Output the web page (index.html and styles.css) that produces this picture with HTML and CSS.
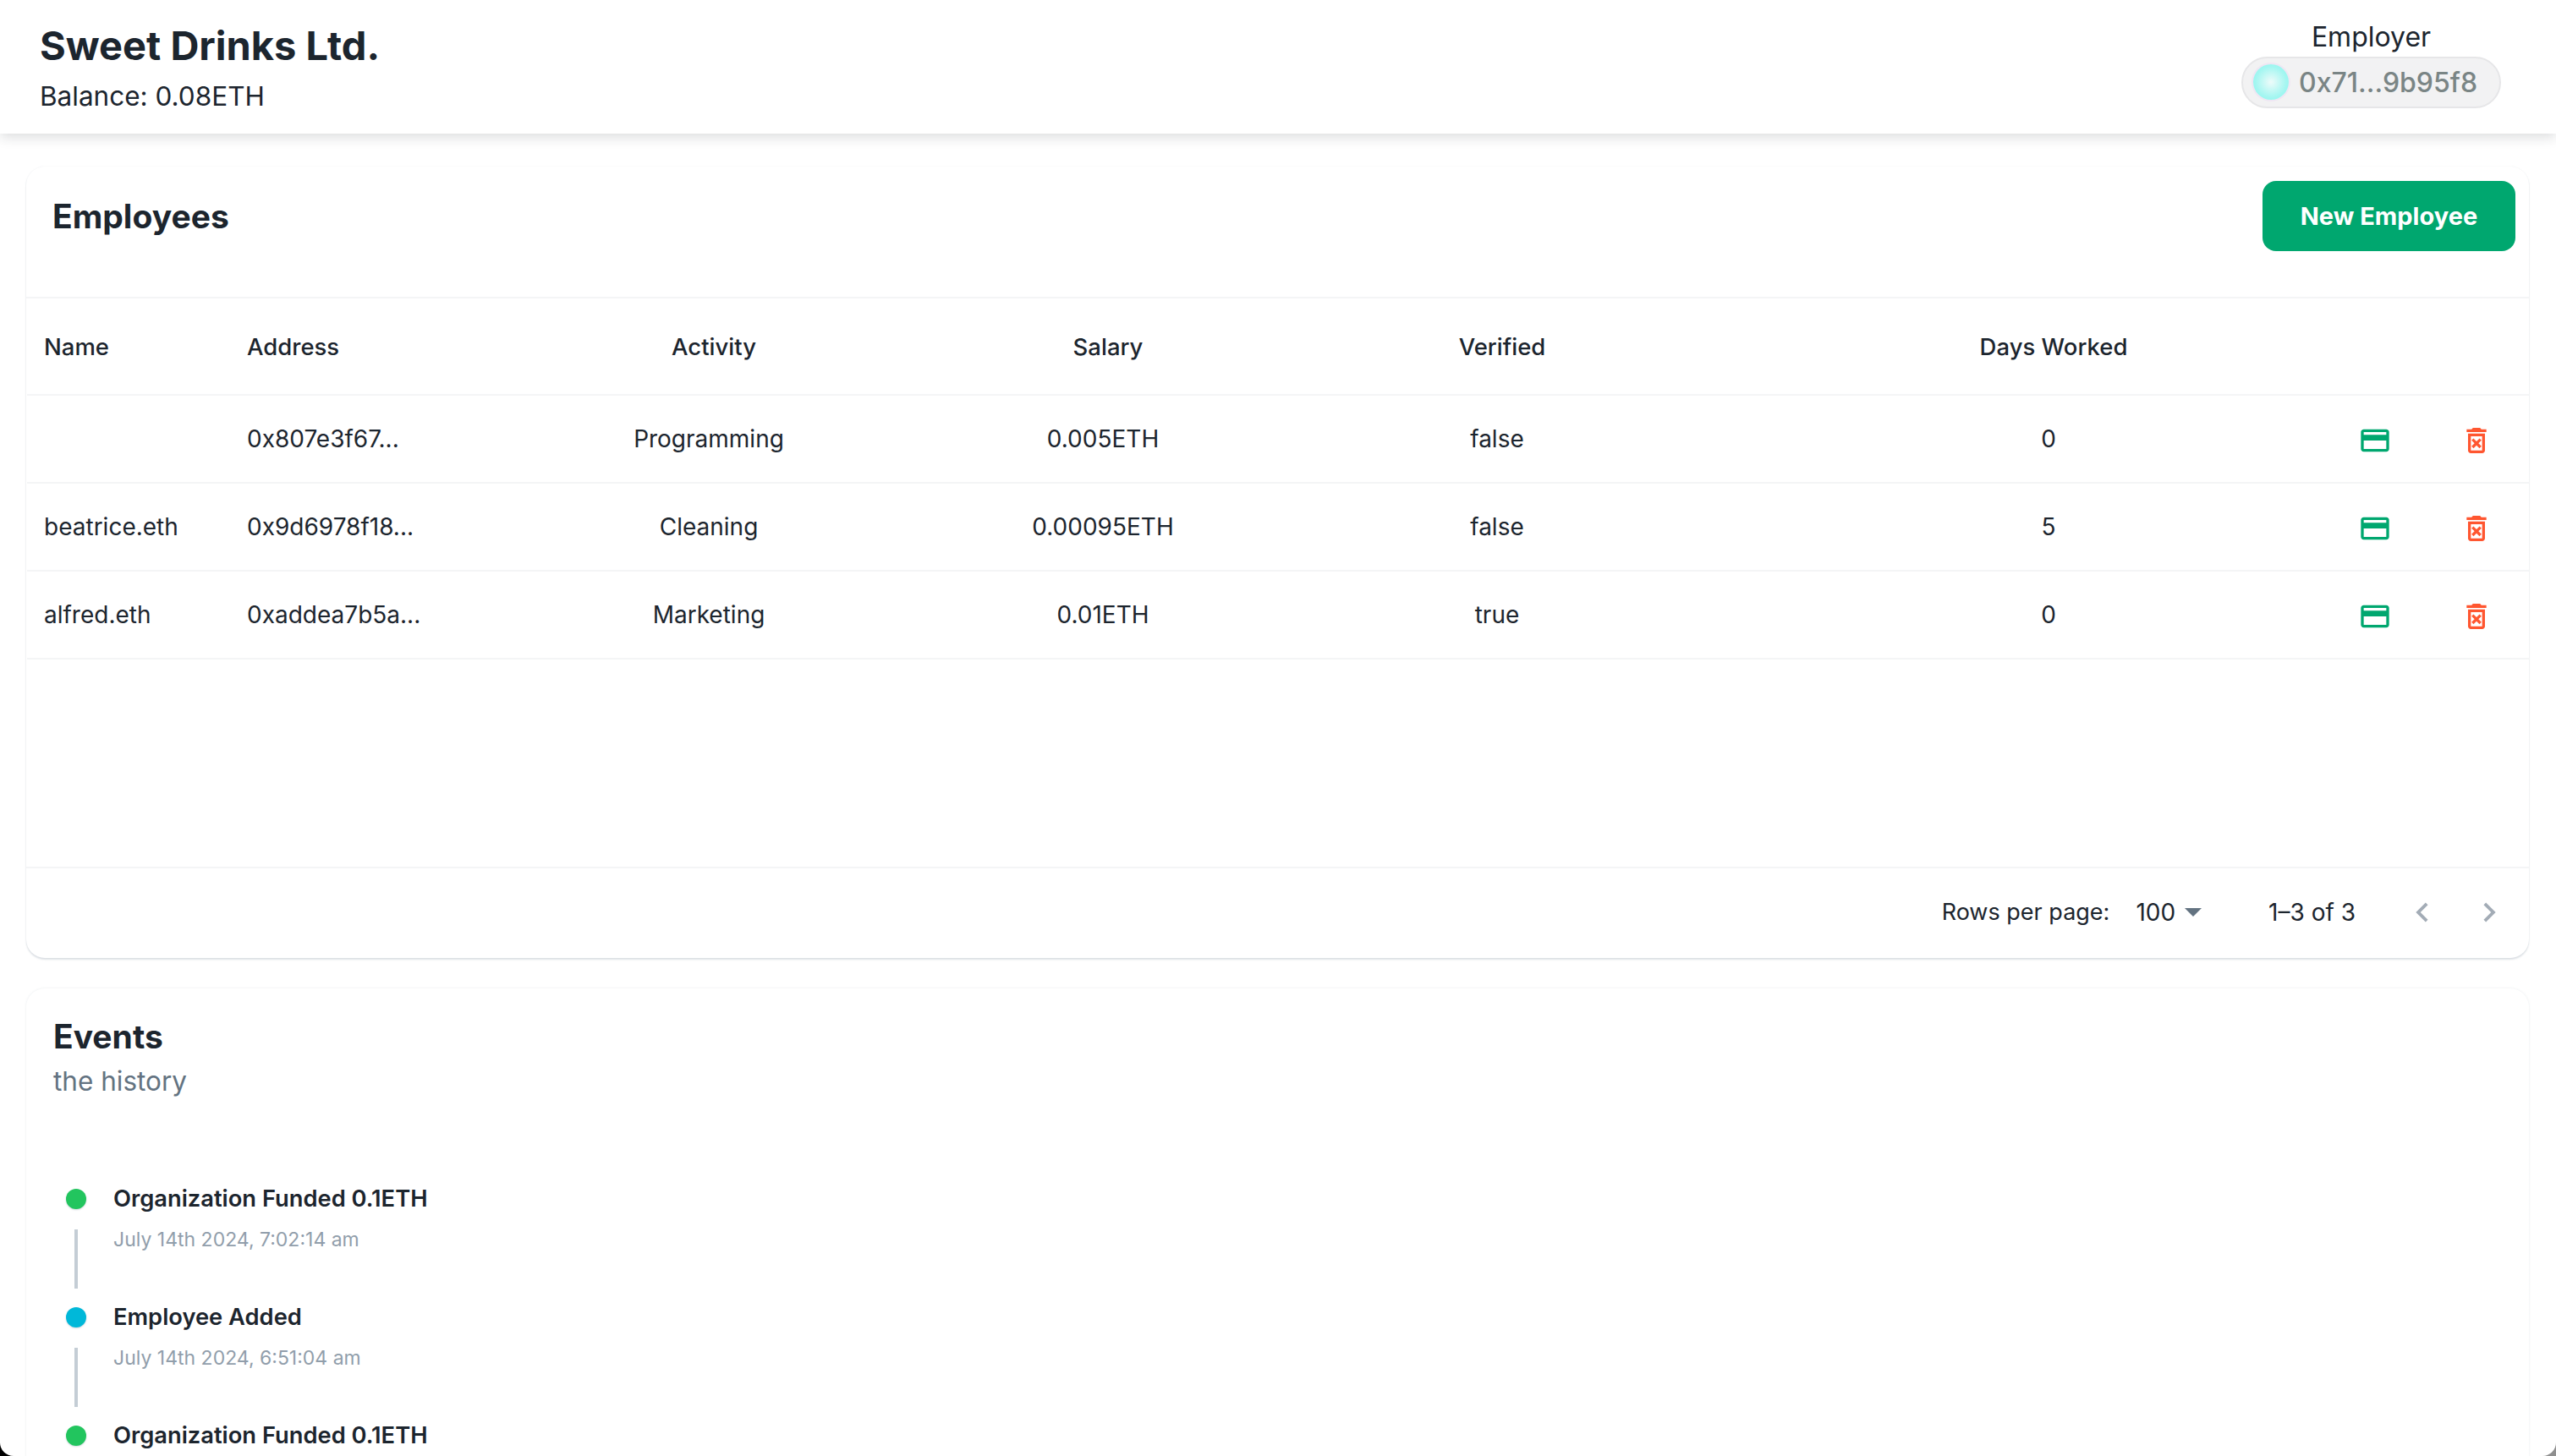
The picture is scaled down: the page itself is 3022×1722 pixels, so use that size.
FILE: index.html
```html
<!DOCTYPE html>
<html lang="en">
<head>
  <meta charset="UTF-8">
  <title>Sweet Drinks Ltd.</title>
  <link rel="stylesheet" href="styles.css">
</head>
<body>
  <div class="screen">
    <header class="topbar">
      <div>
        <h1 class="org-name">Sweet Drinks Ltd.</h1>
        <p class="org-balance">Balance: 0.08ETH</p>
      </div>
      <div class="account">
        <span class="account-role">Employer</span>
        <div class="account-pill">
          <span class="avatar"></span>
          <span class="account-address">0x71...9b95f8</span>
        </div>
      </div>
    </header>

    <main class="content">
      <section class="card employees">
        <div class="card-head">
          <h2 class="card-title">Employees</h2>
          <button class="new-btn">New Employee</button>
        </div>

        <div class="grid-row grid-header">
          <div class="cell">Name</div>
          <div class="cell">Address</div>
          <div class="cell mid">Activity</div>
          <div class="cell mid">Salary</div>
          <div class="cell mid">Verified</div>
          <div class="cell mid days">Days Worked</div>
          <div class="cell"></div>
          <div class="cell"></div>
        </div>

        <div class="grid-row">
          <div class="cell"></div>
          <div class="cell">0x807e3f67...</div>
          <div class="cell mid">Programming</div>
          <div class="cell mid">0.005ETH</div>
          <div class="cell mid">false</div>
          <div class="cell mid days">0</div>
          <div class="cell mid"><svg class="icon pay" viewBox="0 0 24 24"><path d="M20 4H4c-1.11 0-1.99.89-1.99 2L2 18c0 1.11.89 2 2 2h16c1.11 0 2-.89 2-2V6c0-1.11-.89-2-2-2zm0 14H4v-6h16v6zm0-10H4V6h16v2z"/></svg></div>
          <div class="cell mid"><svg class="icon del" viewBox="0 0 24 24"><path d="M14.12 10.47 12 12.59l-2.13-2.12-1.41 1.41L10.59 14l-2.12 2.12 1.41 1.41L12 15.41l2.12 2.12 1.41-1.41L13.41 14l2.12-2.12zM15.5 4l-1-1h-5l-1 1H5v2h14V4zM6 19c0 1.1.9 2 2 2h8c1.1 0 2-.9 2-2V7H6v12zM8 9h8v10H8V9z"/></svg></div>
        </div>

        <div class="grid-row">
          <div class="cell">beatrice.eth</div>
          <div class="cell">0x9d6978f18...</div>
          <div class="cell mid">Cleaning</div>
          <div class="cell mid">0.00095ETH</div>
          <div class="cell mid">false</div>
          <div class="cell mid days">5</div>
          <div class="cell mid"><svg class="icon pay" viewBox="0 0 24 24"><path d="M20 4H4c-1.11 0-1.99.89-1.99 2L2 18c0 1.11.89 2 2 2h16c1.11 0 2-.89 2-2V6c0-1.11-.89-2-2-2zm0 14H4v-6h16v6zm0-10H4V6h16v2z"/></svg></div>
          <div class="cell mid"><svg class="icon del" viewBox="0 0 24 24"><path d="M14.12 10.47 12 12.59l-2.13-2.12-1.41 1.41L10.59 14l-2.12 2.12 1.41 1.41L12 15.41l2.12 2.12 1.41-1.41L13.41 14l2.12-2.12zM15.5 4l-1-1h-5l-1 1H5v2h14V4zM6 19c0 1.1.9 2 2 2h8c1.1 0 2-.9 2-2V7H6v12zM8 9h8v10H8V9z"/></svg></div>
        </div>

        <div class="grid-row">
          <div class="cell">alfred.eth</div>
          <div class="cell">0xaddea7b5a...</div>
          <div class="cell mid">Marketing</div>
          <div class="cell mid">0.01ETH</div>
          <div class="cell mid">true</div>
          <div class="cell mid days">0</div>
          <div class="cell mid"><svg class="icon pay" viewBox="0 0 24 24"><path d="M20 4H4c-1.11 0-1.99.89-1.99 2L2 18c0 1.11.89 2 2 2h16c1.11 0 2-.89 2-2V6c0-1.11-.89-2-2-2zm0 14H4v-6h16v6zm0-10H4V6h16v2z"/></svg></div>
          <div class="cell mid"><svg class="icon del" viewBox="0 0 24 24"><path d="M14.12 10.47 12 12.59l-2.13-2.12-1.41 1.41L10.59 14l-2.12 2.12 1.41 1.41L12 15.41l2.12 2.12 1.41-1.41L13.41 14l2.12-2.12zM15.5 4l-1-1h-5l-1 1H5v2h14V4zM6 19c0 1.1.9 2 2 2h8c1.1 0 2-.9 2-2V7H6v12zM8 9h8v10H8V9z"/></svg></div>
        </div>

        <div class="grid-empty"></div>

        <div class="pager">
          <span class="pager-label">Rows per page:</span>
          <span class="pager-size">100<svg class="caret" viewBox="0 0 20 10"><path d="M0 0h20L10 10z"/></svg></span>
          <span class="pager-range">1–3 of 3</span>
          <svg class="chev" viewBox="0 0 24 24"><path d="M15.41 7.41 14 6l-6 6 6 6 1.41-1.41L10.83 12z"/></svg>
          <svg class="chev" viewBox="0 0 24 24"><path d="M10 6 8.59 7.41 13.17 12l-4.58 4.59L10 18l6-6z"/></svg>
        </div>
      </section>

      <section class="card events">
        <h2 class="card-title">Events</h2>
        <p class="events-sub">the history</p>

        <ul class="timeline">
          <li class="tl-item">
            <div class="tl-rail"><span class="dot green"></span><span class="tl-line"></span></div>
            <div>
              <div class="tl-title">Organization Funded 0.1ETH</div>
              <div class="tl-time">July 14th 2024, 7:02:14 am</div>
            </div>
          </li>
          <li class="tl-item">
            <div class="tl-rail"><span class="dot blue"></span><span class="tl-line"></span></div>
            <div>
              <div class="tl-title">Employee Added</div>
              <div class="tl-time">July 14th 2024, 6:51:04 am</div>
            </div>
          </li>
          <li class="tl-item">
            <div class="tl-rail"><span class="dot green"></span></div>
            <div>
              <div class="tl-title">Organization Funded 0.1ETH</div>
            </div>
          </li>
        </ul>
      </section>
    </main>
  </div>
</body>
</html>
```

FILE: styles.css
```css
* {
  box-sizing: border-box;
}
html, body {
  margin: 0;
  padding: 0;
  overflow: hidden;
}
html {
  background: linear-gradient(to right, #000 50%, #8f8f8f 50%);
}
body {
  font-family: Inter, "Liberation Sans", sans-serif;
  color: #1c252e;
}
h1, h2, p, ul {
  margin: 0;
  padding: 0;
}
.screen {
  height: 1722px;
  overflow: hidden;
  background: #fff;
  border-radius: 0 0 16px 16px;
}

/* top bar */
.topbar {
  height: 158px;
  padding: 0 65px 0 47px;
  display: flex;
  justify-content: space-between;
  align-items: center;
  background: #fff;
  box-shadow: 0 4px 14px rgba(28, 37, 46, 0.16);
  position: relative;
}
.org-name {
  font-size: 47px;
  line-height: 60px;
  font-weight: 700;
  margin-top: 1px;
}
.org-balance {
  font-size: 31.5px;
  line-height: 42px;
  margin-top: 9px;
}
.account {
  display: flex;
  flex-direction: column;
  align-items: center;
}
.account-role {
  font-size: 32px;
  line-height: 38px;
  margin-top: -6px;
}
.account-pill {
  display: flex;
  align-items: center;
  height: 61px;
  width: 307px;
  padding-left: 12px;
  gap: 12px;
  margin-top: 4px;
  background: #f2f2f3;
  border: 2px solid #e6e6e8;
  border-radius: 31px;
}
.avatar {
  width: 42px;
  height: 42px;
  border-radius: 50%;
  background: radial-gradient(circle, #eefbfa 0%, #a5f6f1 60%, #7ff6ee 100%);
  box-shadow: 0 0 0 2px #efe6f3;
}
.account-address {
  font-size: 32px;
  font-weight: 500;
  color: #7a8585;
}

/* cards */
.content {
  padding: 39px 32px 0 31px;
  display: flex;
  flex-direction: column;
  gap: 36px;
}
.card {
  background: #fff;
  border-radius: 22px;
  box-shadow: 0 0 2px rgba(145, 158, 171, 0.14), 0 2px 2px rgba(145, 158, 171, 0.3);
}
.events {
  box-shadow: 0 0 3px rgba(145, 158, 171, 0.2);
}
.employees {
  height: 936px;
  display: flex;
  flex-direction: column;
}
.card-head {
  height: 156px;
  padding: 17px 16px 0 31px;
  display: flex;
  justify-content: space-between;
  align-items: flex-start;
  border-bottom: 2px solid #f4f5f6;
}
.card-title {
  font-size: 39px;
  line-height: 54px;
  font-weight: 700;
}
.card-head .card-title {
  line-height: 83px;
}
.new-btn {
  width: 299px;
  height: 83px;
  border: none;
  border-radius: 16px;
  background: #00a76f;
  color: #fff;
  font-family: inherit;
  font-size: 29px;
  font-weight: 700;
}

/* employee table */
.grid-row {
  display: grid;
  grid-template-columns: 240px 333px 466px 466px 466px 745px 120px 120px;
  height: 104px;
  margin-left: 1px;
  align-items: center;
  font-size: 28px;
  border-bottom: 2px solid #f4f5f6;
}
.grid-header {
  height: 115px;
  font-size: 27.5px;
  font-weight: 500;
}
.cell {
  padding: 0 20px;
  white-space: nowrap;
  overflow: hidden;
}
.mid {
  text-align: center;
}
.days {
  padding-left: 93px;
  padding-right: 0;
}
.grid-header .mid {
  padding-left: 32px;
  padding-right: 20px;
}
.grid-header .days {
  padding-left: 105px;
  padding-right: 0;
}
.icon {
  display: block;
  width: 40px;
  height: 40px;
  margin: 4px auto 0;
}
.pay {
  fill: #00a76f;
}
.del {
  fill: #ff5630;
}
.grid-empty {
  flex: 1;
  border-bottom: 2px solid #f4f5f6;
}
.pager {
  height: 106px;
  padding-right: 24px;
  padding-bottom: 3px;
  display: flex;
  justify-content: flex-end;
  align-items: center;
  font-size: 28px;
}
.pager-label {
  font-size: 27px;
}
.pager-size {
  display: flex;
  align-items: center;
  gap: 11px;
  margin-left: 31px;
}
.caret {
  width: 20px;
  height: 10px;
  fill: #637381;
}
.pager-range {
  margin: 0 23px 0 79px;
}
.chev {
  width: 46px;
  height: 46px;
  fill: #a3acb6;
  margin-left: 33px;
}

/* events */
.events {
  padding: 30px 32px 0;
  height: 700px;
}
.events-sub {
  font-size: 31.5px;
  line-height: 42px;
  margin-top: 5px;
  color: #637381;
}
.timeline {
  list-style: none;
  margin-top: 98px;
}
.tl-item {
  display: flex;
  gap: 32px;
  height: 140px;
  padding-left: 15px;
}
.tl-rail {
  width: 24px;
  display: flex;
  flex-direction: column;
  align-items: center;
  padding-top: 8px;
}
.dot {
  width: 24px;
  height: 24px;
  border-radius: 50%;
  box-shadow: 0 1px 2px rgba(145, 158, 171, 0.4);
}
.green {
  background: #22c55e;
}
.blue {
  background: #00b8d9;
}
.tl-line {
  width: 4px;
  height: 70px;
  margin-top: 24px;
  background: #c4cdd5;
}
.tl-title {
  font-size: 27.3px;
  line-height: 40px;
  font-weight: 600;
}
.tl-time {
  font-size: 23px;
  line-height: 36px;
  margin-top: 10px;
  color: #919eab;
}
```
